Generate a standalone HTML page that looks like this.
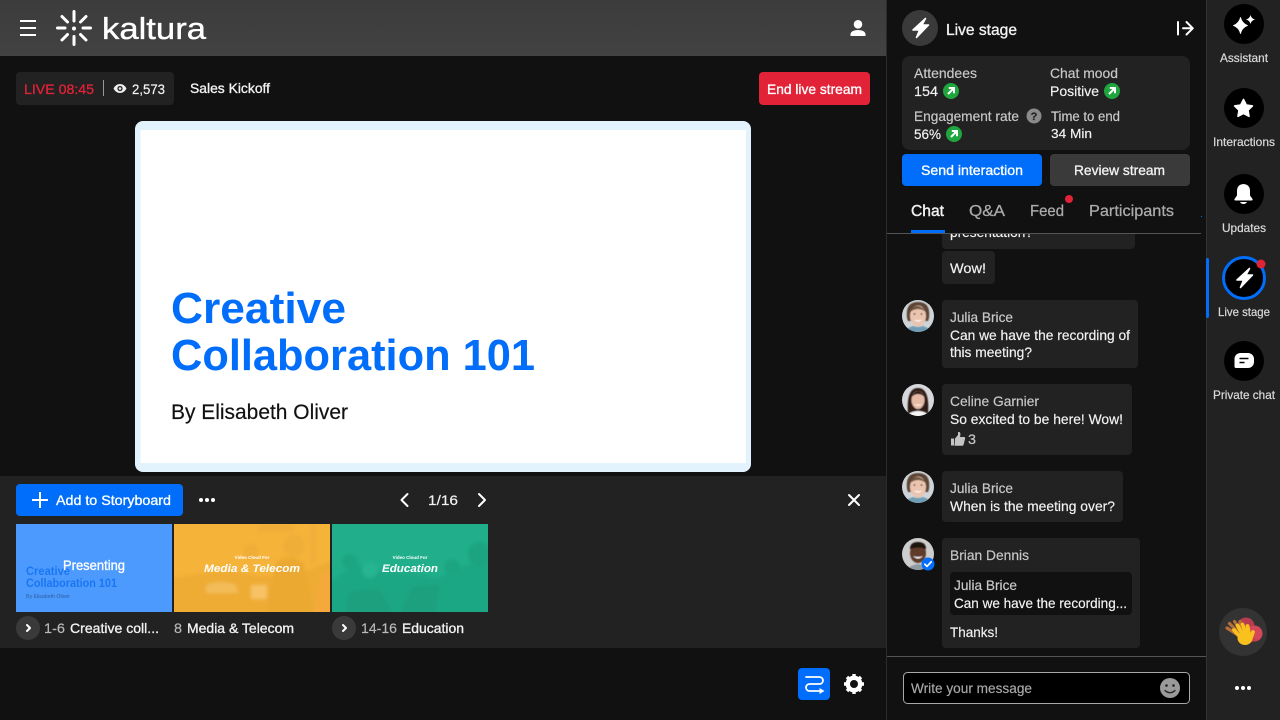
<!DOCTYPE html>
<html><head><meta charset="utf-8"><title>Kaltura Live</title>
<style>
html,body{margin:0;padding:0;background:#111;width:1280px;height:720px;overflow:hidden}
svg{display:block}
text{font-family:"Liberation Sans",sans-serif;font-size:14px;color:#f2f2f2;fill:currentColor;stroke:currentColor;stroke-width:.18px;white-space:pre}
.g{color:#b9b9b9}.m{stroke-width:.32px}
.n{color:#c8c8c8}
.r{font-size:12px;color:#d8d8d8;stroke-width:.22px}
.tab{font-size:16px;color:#ababab;stroke-width:.25px}
.ic{fill:none;stroke:#fff;stroke-linecap:round;stroke-linejoin:round}
</style></head><body>
<svg width="1280" height="720" viewBox="0 0 1280 720" xmlns="http://www.w3.org/2000/svg">
<defs>
<linearGradient id="hd" x1="0" y1="0" x2="0" y2="1"><stop offset="0" stop-color="#3c3c3c"/><stop offset="1" stop-color="#424242"/></linearGradient>
<filter id="b1" x="-10%" y="-10%" width="120%" height="120%"><feGaussianBlur stdDeviation="1.600"/></filter>
<filter id="b2" x="-10%" y="-10%" width="120%" height="120%"><feGaussianBlur stdDeviation=".55"/></filter>
<clipPath id="chat"><rect x="887" y="234" width="319" height="422"/></clipPath>
<clipPath id="a1"><circle cx="918" cy="316" r="16"/></clipPath>
<clipPath id="a2"><circle cx="918" cy="400" r="16"/></clipPath>
<clipPath id="a3"><circle cx="918" cy="487" r="16"/></clipPath>
<clipPath id="a4"><circle cx="918" cy="554" r="16"/></clipPath>
<clipPath id="t2"><rect x="174" y="524" width="156" height="88"/></clipPath>
<clipPath id="t3"><rect x="332" y="524" width="156" height="88"/></clipPath>
<g id="up"><path d="M-2.200-3H3V2.200M3-3-3 3" fill="none" stroke="#fff" stroke-width="2"/></g>
<g id="jul">
<rect x="900" y="298" width="36" height="36" fill="#cfd4d9"/>
<g filter="url(#b2)">
<path d="M907 318q-2-16 11-16t11 16l-1 3h-20z" fill="#5c4434"/>
<ellipse cx="918" cy="316" rx="8" ry="10.500" fill="#eac4ae"/>
<path d="M910 312q2-6 8-6 5 1 8 6-4-3-8-3t-8 3z" fill="#6d5240"/>
<path d="M904 334q2-6 9-8 5 2 10 0 7 2 9 8z" fill="#6f9db5"/>
<path d="M913.500 319.500q4.500 1.500 9 0-4.500 4-9 0z" fill="#fff"/>
<circle cx="914.500" cy="314" r=".9" fill="#4a362c"/><circle cx="921.500" cy="314" r=".9" fill="#4a362c"/>
</g>
</g>
</defs>

<rect width="1280" height="720" fill="#111"/>
<!-- header -->
<rect width="886" height="56" fill="url(#hd)"/>
<rect x="20" y="20" width="16" height="2" fill="#fff"/><rect x="20" y="27" width="16" height="2" fill="#fff"/><rect x="20" y="34" width="16" height="2" fill="#fff"/>
<g stroke="#fff" stroke-width="3" stroke-linecap="round" fill="none">
<path d="M74 11.500V21M74 36.500V44.500M57.500 28H65M83 28H90.500M62 16.500 67.500 22M80.500 34.500 86 40M86 16.500 80.500 22M67.500 34.500 62 40"/>
</g><circle cx="74" cy="28.500" r="2" fill="#fff"/>
<text x="102" y="39" style="font-size:30.500px;color:#fff;stroke-width:.35px" textLength="104" lengthAdjust="spacingAndGlyphs">kaltura</text>
<path d="M858 20a4.300 4.300 0 1 1 0 8.600a4.300 4.300 0 1 1 0-8.600zM850.500 36v-1.800c0-2.800 4-4.200 7.500-4.200s7.500 1.400 7.500 4.200V36z" fill="#fff"/>

<!-- live bar -->
<rect x="16" y="72" width="158" height="33" rx="4" fill="#222"/>
<text x="24" y="94" class="m" style="color:#e12237" textLength="70" lengthAdjust="spacingAndGlyphs">LIVE 08:45</text>
<rect x="103" y="80" width="1" height="16" fill="#999"/>
<path d="M113.500 88.500c1.500-3 4-4.500 6.500-4.500s5 1.500 6.500 4.500c-1.500 3-4 4.500-6.500 4.500s-5-1.500-6.500-4.500z" fill="#eee"/><circle cx="120" cy="88.500" r="2.600" fill="#222"/><circle cx="120" cy="88.500" r="1.300" fill="#eee"/>
<text x="132" y="94" style="font-size:13.500px" textLength="33" lengthAdjust="spacingAndGlyphs">2,573</text>
<text x="190" y="93" class="m" textLength="80" lengthAdjust="spacingAndGlyphs">Sales Kickoff</text>
<rect x="759" y="72" width="111" height="33" rx="4" fill="#e12237"/>
<text x="767" y="94" class="m" style="color:#fff" textLength="95" lengthAdjust="spacingAndGlyphs">End live stream</text>

<!-- slide -->
<rect x="135" y="121" width="616" height="351" rx="8" fill="#e3f3fd"/>
<rect x="140.500" y="130" width="605.500" height="333" fill="#fff"/>
<text x="171" y="323" style="font-size:44px;font-weight:700;color:#006efa;stroke-width:0" textLength="175" lengthAdjust="spacingAndGlyphs">Creative</text>
<text x="171" y="370" style="font-size:44px;font-weight:700;color:#006efa;stroke-width:0" textLength="364" lengthAdjust="spacingAndGlyphs">Collaboration 101</text>
<text x="171" y="419" style="font-size:21px;color:#111" textLength="177" lengthAdjust="spacingAndGlyphs">By Elisabeth Oliver</text>

<!-- storyboard -->
<rect y="476" width="886" height="172" fill="#222"/>
<rect x="16" y="484" width="167" height="32" rx="4" fill="#006efa"/>
<path d="M40 492V508M32 500H48" stroke="#fff" stroke-width="2" fill="none"/>
<text x="56" y="505" class="m" style="color:#fff" textLength="115" lengthAdjust="spacingAndGlyphs">Add to Storyboard</text>
<circle cx="201" cy="500" r="2" fill="#fff"/><circle cx="207" cy="500" r="2" fill="#fff"/><circle cx="213" cy="500" r="2" fill="#fff"/>
<path d="M407.500 494 401.500 500 407.500 506M479 494 485 500 479 506" class="ic" stroke-width="2"/>
<text x="428" y="505" textLength="30" lengthAdjust="spacingAndGlyphs">1/16</text>
<path d="M849 495 859 505M859 495 849 505" class="ic" stroke-width="2"/>

<rect x="16" y="524" width="156" height="88" fill="#4d9aff"/>
<text x="26" y="575" style="font-size:11.500px;font-weight:700;color:#1a76f2;stroke-width:0" textLength="44" lengthAdjust="spacingAndGlyphs">Creative</text>
<text x="26" y="587" style="font-size:11.500px;font-weight:700;color:#1a76f2;stroke-width:0" textLength="91" lengthAdjust="spacingAndGlyphs">Collaboration 101</text>
<text x="26" y="598" style="font-size:5.500px;color:#2a609f;stroke-width:0" textLength="44" lengthAdjust="spacingAndGlyphs">By Elisabeth Oliver</text>
<text x="63" y="570" class="m" style="color:#fff" textLength="62" lengthAdjust="spacingAndGlyphs">Presenting</text>

<rect x="174" y="524" width="156" height="88" fill="#f5b33a"/>
<g clip-path="url(#t2)"><g filter="url(#b1)">
<path d="M170 578l59-8 30 6 40-2 35-14v56H170z" fill="#eeac36"/>
<circle cx="294" cy="546" r="11" fill="#eeae38"/>
<path d="M276 562q16-10 28 2l10 48h-48z" fill="#eba932"/>
<circle cx="251" cy="552" r="8" fill="#f0ae38"/>
<path d="M206 585q15-6 30 0l2 8h-32z" fill="#f3bc58"/>
<rect x="251" y="585" width="16" height="14" fill="#f6c264"/>
<rect x="258" y="524" width="36" height="8" fill="#efae38"/>
<rect x="310" y="524" width="6" height="40" fill="#efaf3a"/>
<path d="M320 575 334 568V616H314z" fill="#f5a93a"/>
</g></g>
<text x="252" y="559" text-anchor="middle" style="font-size:4.500px;font-weight:700;color:#fff;stroke-width:0">Video Cloud For</text>
<text x="204" y="572" style="font-size:11px;font-weight:700;font-style:italic;color:#fff;stroke-width:0" textLength="96" lengthAdjust="spacingAndGlyphs">Media &amp; Telecom</text>

<rect x="332" y="524" width="156" height="88" fill="#21af8b"/>
<g clip-path="url(#t3)"><g filter="url(#b1)">
<path d="M328 582l29-18 30 8 25 0 25 6 30-14 25-2V616H328z" fill="#1ca784"/>
<circle cx="350" cy="562" r="8" fill="#1ca581"/><circle cx="370" cy="570" r="8" fill="#25b491"/>
<circle cx="452" cy="567" r="8" fill="#1ca581"/><circle cx="480" cy="554" r="12" fill="#1ba380"/>
<path d="M345 614l4-22 30-4 15 26zM400 614l12-28 28-2-5 30z" fill="#1aa07e"/>
</g></g>
<text x="410" y="559" text-anchor="middle" style="font-size:4.500px;font-weight:700;color:#fff;stroke-width:0">Video Cloud For</text>
<text x="382" y="572" style="font-size:11px;font-weight:700;font-style:italic;color:#fff;stroke-width:0" textLength="56" lengthAdjust="spacingAndGlyphs">Education</text>

<circle cx="28" cy="628" r="12" fill="#3a3a3a"/><path d="M27 625 30 628 27 631" class="ic" stroke-width="2"/>
<text x="44" y="633" class="g" textLength="21" lengthAdjust="spacingAndGlyphs">1-6</text>
<text x="70" y="633" class="m" textLength="89" lengthAdjust="spacingAndGlyphs">Creative coll...</text>
<text x="174" y="633" class="g" textLength="8" lengthAdjust="spacingAndGlyphs">8</text>
<text x="187" y="633" class="m" textLength="107" lengthAdjust="spacingAndGlyphs">Media &amp; Telecom</text>
<circle cx="344" cy="628" r="12" fill="#3a3a3a"/><path d="M343 625 346 628 343 631" class="ic" stroke-width="2"/>
<text x="361" y="633" class="g" textLength="36" lengthAdjust="spacingAndGlyphs">14-16</text>
<text x="402" y="633" class="m" textLength="62" lengthAdjust="spacingAndGlyphs">Education</text>

<!-- bottom controls -->
<rect x="798" y="668" width="32" height="32" rx="4" fill="#006efa"/>
<path d="M806 677H819.500a3.500 3.500 0 0 1 0 7H809.500a3.500 3.500 0 0 0 0 7H820" class="ic" stroke-width="1.800"/>
<path d="M819.500 688 824.500 691 819.500 694z" fill="#fff"/>
<g transform="translate(854 684)">
<circle r="6.200" fill="none" stroke="#fff" stroke-width="4.400"/>
<g stroke="#fff" stroke-width="3.400"><path d="M0-10V-7M0 7V10M-10 0H-7M7 0H10M-7-7-5-5M5 5 7 7M7-7 5-5M-5 5-7 7"/></g>
</g>

<!-- panel separators -->
<rect x="886" y="0" width="1" height="720" fill="#2b2b2b"/>
<rect x="1206" y="0" width="74" height="720" fill="#222"/>
<rect x="1206" y="0" width="1" height="720" fill="#333"/>

<!-- live stage header -->
<circle cx="920" cy="28" r="18" fill="#3a3a3a"/>
<path d="M925.500 18.500 913 30H919.500L916.500 37.500 928.500 25H922z" fill="#fff" stroke="#fff" stroke-width="1.600" stroke-linejoin="round"/>
<text x="946" y="35" class="m" style="font-size:16px" textLength="71" lengthAdjust="spacingAndGlyphs">Live stage</text>
<path d="M1178 22V34.500M1183 28.300H1192.500M1186.500 22 1192.800 28.300 1186.500 34.500" class="ic" stroke-width="2" stroke-linecap="butt"/>

<rect x="902" y="56" width="288" height="94" rx="8" fill="#222"/>
<text x="914" y="78" class="n" textLength="63" lengthAdjust="spacingAndGlyphs">Attendees</text>
<text x="914" y="96" textLength="24" lengthAdjust="spacingAndGlyphs">154</text>
<circle cx="951" cy="91" r="8" fill="#20a63f"/><use href="#up" x="951" y="91"/>
<text x="1050" y="78" class="n" textLength="68" lengthAdjust="spacingAndGlyphs">Chat mood</text>
<text x="1050" y="96" textLength="49" lengthAdjust="spacingAndGlyphs">Positive</text>
<circle cx="1112" cy="91" r="8" fill="#20a63f"/><use href="#up" x="1112" y="91"/>
<text x="914" y="121" class="n" textLength="105" lengthAdjust="spacingAndGlyphs">Engagement rate</text>
<circle cx="1034" cy="116" r="7.500" fill="#8a8a8a"/>
<text x="1034" y="120" text-anchor="middle" style="font-size:11px;font-weight:700;color:#222">?</text>
<text x="914" y="139" textLength="27" lengthAdjust="spacingAndGlyphs">56%</text>
<circle cx="954" cy="134" r="8" fill="#20a63f"/><use href="#up" x="954" y="134"/>
<text x="1051" y="121" class="n" style="font-size:13.500px" textLength="69" lengthAdjust="spacingAndGlyphs">Time to end</text>
<text x="1051" y="138" style="font-size:13px" textLength="41" lengthAdjust="spacingAndGlyphs">34 Min</text>

<rect x="902" y="154" width="140" height="32" rx="4" fill="#006efa"/>
<text x="921" y="175" class="m" style="color:#fff" textLength="102" lengthAdjust="spacingAndGlyphs">Send interaction</text>
<rect x="1050" y="154" width="140" height="32" rx="4" fill="#3a3a3a"/>
<text x="1074" y="175" class="m" textLength="91" lengthAdjust="spacingAndGlyphs">Review stream</text>

<text x="911" y="216" style="font-size:16px;stroke-width:.4px" textLength="33" lengthAdjust="spacingAndGlyphs">Chat</text>
<text x="969" y="216" class="tab" textLength="36" lengthAdjust="spacingAndGlyphs">Q&amp;A</text>
<text x="1030" y="216" class="tab" textLength="34" lengthAdjust="spacingAndGlyphs">Feed</text>
<circle cx="1069" cy="199" r="4" fill="#e12237"/>
<text x="1089" y="216" class="tab" textLength="85" lengthAdjust="spacingAndGlyphs">Participants</text>
<rect x="1201" y="216" width="1" height="1" fill="#006efa"/>

<!-- chat -->
<g clip-path="url(#chat)">
<rect x="942" y="200" width="193" height="49" rx="4" fill="#222"/>
<text x="950" y="237" textLength="83" lengthAdjust="spacingAndGlyphs">presentation?</text>
</g>
<rect x="887" y="233" width="314" height="1" fill="#555"/>
<rect x="911" y="230" width="34" height="3" fill="#006efa"/>

<rect x="942" y="251" width="53" height="33" rx="4" fill="#222"/>
<text x="950" y="273" textLength="36" lengthAdjust="spacingAndGlyphs">Wow!</text>

<g clip-path="url(#a1)"><use href="#jul"/></g>
<rect x="942" y="300" width="196" height="68" rx="4" fill="#222"/>
<text x="950" y="322" class="n" textLength="63" lengthAdjust="spacingAndGlyphs">Julia Brice</text>
<text x="950" y="340" textLength="180" lengthAdjust="spacingAndGlyphs">Can we have the recording of</text>
<text x="950" y="357" textLength="82" lengthAdjust="spacingAndGlyphs">this meeting?</text>

<g clip-path="url(#a2)"><rect x="900" y="382" width="36" height="36" fill="#d6d8dc"/><g filter="url(#b2)">
<path d="M908 414q-2-26 10-26t10 26z" fill="#2e1f19"/>
<ellipse cx="918" cy="400" rx="6.500" ry="9" fill="#e6bba5"/>
<path d="M911.500 397q3-6 6.500-6t6.500 6q-3-3-6.500-3t-6.500 3z" fill="#2e1f19"/>
<path d="M914 404q4 1.500 8 0-4 3.500-8 0z" fill="#fff"/>
<path d="M906 418q3-7 12-7t12 7z" fill="#f4f4f4"/></g></g>
<rect x="942" y="384" width="190" height="71" rx="4" fill="#222"/>
<text x="950" y="406" class="n" textLength="89" lengthAdjust="spacingAndGlyphs">Celine Garnier</text>
<text x="950" y="424" textLength="173" lengthAdjust="spacingAndGlyphs">So excited to be here! Wow!</text>
<path d="M951 438.500h3v7h-3zM955 438.500l3-3.500v-3h1.500q1.500 1 .5 5h4.500q1 .5.500 2l-1.500 6q-.3.800-1.500.8h-7.500z" fill="#c4c4c4"/>
<text x="968" y="444" class="n" textLength="8" lengthAdjust="spacingAndGlyphs">3</text>

<g clip-path="url(#a3)"><use href="#jul" y="171"/></g>
<rect x="942" y="471" width="181" height="51" rx="4" fill="#222"/>
<text x="950" y="493" class="n" textLength="63" lengthAdjust="spacingAndGlyphs">Julia Brice</text>
<text x="950" y="511" textLength="165" lengthAdjust="spacingAndGlyphs">When is the meeting over?</text>

<g clip-path="url(#a4)"><rect x="900" y="536" width="36" height="36" fill="#cdcdcd"/><g filter="url(#b2)">
<ellipse cx="918" cy="553" rx="8" ry="10" fill="#5e3b2a"/>
<path d="M910 549q0-7 8-7t8 7q-8-3-16 0z" fill="#1a1311"/>
<path d="M913 556q5 2 10 0-5 5-10 0z" fill="#fff"/>
<path d="M905 572q2-6 13-8 10 2 13 8z" fill="#8d9aa3"/></g></g>
<circle cx="928" cy="564" r="6.500" fill="#006efa"/>
<path d="M924.800 564.200 927 566.400 931.200 561.800" class="ic" stroke-width="1.700"/>
<rect x="942" y="538" width="198" height="110" rx="4" fill="#222"/>
<text x="950" y="560" class="n" textLength="79" lengthAdjust="spacingAndGlyphs">Brian Dennis</text>
<rect x="950" y="572" width="182" height="43" rx="4" fill="#111"/>
<text x="954" y="590" class="n" textLength="63" lengthAdjust="spacingAndGlyphs">Julia Brice</text>
<text x="954" y="608" textLength="173" lengthAdjust="spacingAndGlyphs">Can we have the recording...</text>
<text x="950" y="637" textLength="48" lengthAdjust="spacingAndGlyphs">Thanks!</text>

<rect x="887" y="656" width="319" height="1" fill="#555"/>
<rect x="903.500" y="672.500" width="286" height="31" rx="4" fill="#000" stroke="#a8a8a8"/>
<text x="911" y="693" style="color:#a8a8a8" textLength="121" lengthAdjust="spacingAndGlyphs">Write your message</text>
<circle cx="1170" cy="688" r="10" fill="#9a9a9a"/>
<circle cx="1166.500" cy="685.500" r="1.300" fill="#222"/><circle cx="1173.500" cy="685.500" r="1.300" fill="#222"/>
<path d="M1165 690.500q5 4.500 10 0" fill="none" stroke="#222" stroke-width="1.300" stroke-linecap="round"/>

<!-- rail -->
<circle cx="1244" cy="24" r="20" fill="#000"/>
<path d="M1240.500 17.500q1.500 6 7 8-5.500 2-7 8-1.500-6-7-8 5.500-2 7-8z" fill="#fff" stroke="#fff" stroke-width=".8" stroke-linejoin="round"/>
<path d="M1250.500 15q.8 3.500 4.500 4.500-3.700 1-4.500 4.500-.8-3.500-4.500-4.500 3.700-1 4.500-4.500z" fill="#fff"/>
<text x="1220" y="62" class="r" textLength="48" lengthAdjust="spacingAndGlyphs">Assistant</text>

<circle cx="1244" cy="108" r="20" fill="#000"/>
<path d="M1243.500 99.500 1246.300 105 1252.400 105.900 1248 110.200 1249 116.300 1243.500 113.400 1238 116.300 1239 110.200 1234.600 105.900 1240.700 105z" fill="#fff" stroke="#fff" stroke-width="1.600" stroke-linejoin="round"/>
<text x="1213" y="146" class="r" textLength="62" lengthAdjust="spacingAndGlyphs">Interactions</text>

<circle cx="1244" cy="194" r="20" fill="#000"/>
<path d="M1243.500 184q6.500.5 6.500 7v4.500l2.500 3.500q.5 1.500-1 1.500h-16q-1.500 0-1-1.500l2.500-3.500v-4.500q0-6.500 6.500-7z" fill="#fff"/><path d="M1240 202h7q-1 2-3.500 2t-3.500-2z" fill="#fff"/>
<text x="1222" y="232" class="r" textLength="44" lengthAdjust="spacingAndGlyphs">Updates</text>

<rect x="1206" y="258" width="3" height="60" rx="1.500" fill="#006efa"/>
<circle cx="1244" cy="278" r="20.500" fill="#000" stroke="#006efa" stroke-width="3"/>
<path d="M1249.500 268.500 1237 280H1243.500L1240.500 287.500 1252.500 275H1246z" fill="#fff" stroke="#fff" stroke-width="1.600" stroke-linejoin="round"/>
<circle cx="1261" cy="264" r="4.500" fill="#e12237"/>
<text x="1218" y="316" class="r" textLength="52" lengthAdjust="spacingAndGlyphs">Live stage</text>

<circle cx="1244" cy="361" r="20" fill="#000"/>
<path d="M1240 353h8a6 6 0 0 1 6 6v3a6 6 0 0 1-6 6h-12q-1.500 0-1.500-1.500v-7.500a6 6 0 0 1 5.500-6z" fill="#fff"/>
<path d="M1239.500 358.500h9M1239.500 362.500h5" stroke="#000" stroke-width="1.600" fill="none"/>
<text x="1213" y="399" class="r" textLength="62" lengthAdjust="spacingAndGlyphs">Private chat</text>

<circle cx="1243" cy="632" r="24" fill="#333"/>
<circle cx="1246" cy="626" r="8.500" fill="#b83c50"/>
<circle cx="1254.500" cy="633.500" r="8" fill="#d4485a"/>
<path d="M1240 630 1248 643 1259 640z" fill="#c9404f"/>
<g stroke="#b5703a" stroke-width="3.200" stroke-linecap="round" fill="none"><path d="M1238 635 1227 628M1239 633 1229.500 623.500M1241 631 1234.500 621.500M1243 630 1240 621.500"/></g>
<g stroke="#f9c11d" stroke-width="3.800" stroke-linecap="round" fill="none"><path d="M1241 638 1234 630M1243 635 1237.500 625.500M1246 634 1242.500 624.500M1249 634 1247.500 626M1251 638 1253 632"/></g>
<ellipse cx="1245" cy="638" rx="7.500" ry="7" fill="#f9c11d"/>
<circle cx="1237" cy="688" r="2" fill="#fff"/><circle cx="1243" cy="688" r="2" fill="#fff"/><circle cx="1249" cy="688" r="2" fill="#fff"/>
</svg>
</body></html>
